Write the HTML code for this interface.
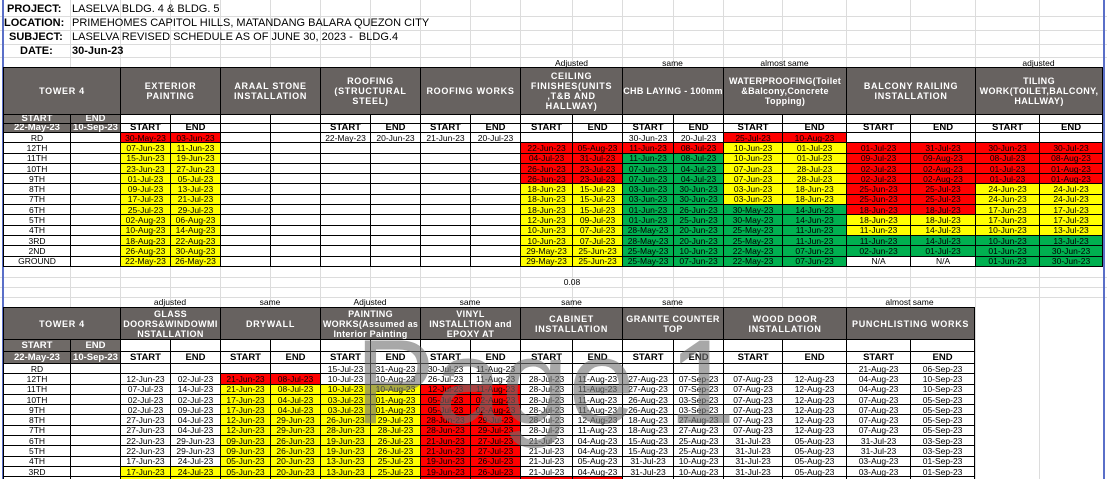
<!DOCTYPE html>
<html><head><meta charset="utf-8"><style>
html,body{margin:0;padding:0;width:1107px;height:479px;overflow:hidden;background:#fff;position:relative;font-family:"Liberation Sans",Arial,sans-serif}
.gl{position:absolute;top:0;height:479px;width:1px;background:#dcdcdc}
.hl{position:absolute;left:0;width:1107px;height:1px;background:#dcdcdc}
table{position:absolute;border-collapse:collapse;table-layout:fixed;font-size:8.5px;background:#fff}
td{border:1px solid #000;padding:0;text-align:center;white-space:nowrap;overflow:hidden;line-height:8px;color:#000}
.h{background:#676260;color:#fff;font-weight:bold;font-size:9px;line-height:10px;white-space:normal;letter-spacing:.7px;padding:0 3px}
.s{background:#6f6a67;color:#fff;font-weight:bold;font-size:9.5px;line-height:8px}
.b{font-weight:bold;font-size:9.5px}
.r{background:#ff0000}.y{background:#ffff00}.g{background:#00b050}
.lbl{position:absolute;font-size:8.5px;color:#000;text-align:center}
.info{position:absolute;font-size:11px;line-height:14px}
</style></head><body>
<div class="gl" style="left:70px"></div><div class="gl" style="left:120px"></div><div class="gl" style="left:170px"></div><div class="gl" style="left:220px"></div><div class="gl" style="left:270px"></div><div class="gl" style="left:320px"></div><div class="gl" style="left:370px"></div><div class="gl" style="left:420px"></div><div class="gl" style="left:470px"></div><div class="gl" style="left:520px"></div><div class="gl" style="left:572px"></div><div class="gl" style="left:622px"></div><div class="gl" style="left:673px"></div><div class="gl" style="left:723px"></div><div class="gl" style="left:782px"></div><div class="gl" style="left:846px"></div><div class="gl" style="left:910px"></div><div class="gl" style="left:975px"></div><div class="gl" style="left:1039px"></div>
<div class="hl" style="top:16px"></div><div class="hl" style="top:30px"></div><div class="hl" style="top:44px"></div><div class="hl" style="top:57px"></div><div class="hl" style="top:277px"></div><div class="hl" style="top:287px"></div><div class="hl" style="top:297px"></div>
<div style="position:absolute;left:2px;top:0;width:2px;height:479px;background:#5a6fc8"></div>
<div style="position:absolute;left:1103px;top:0;width:2px;height:479px;background:#5a6fc8"></div>

<div class="info" style="left:7px;top:2px;font-weight:bold">PROJECT:</div><div class="info" style="left:72px;top:2px">LASELVA BLDG. 4 &amp; BLDG. 5</div>
<div class="info" style="left:4px;top:16px;font-weight:bold">LOCATION:</div><div class="info" style="left:72px;top:16px">PRIMEHOMES CAPITOL HILLS, MATANDANG BALARA QUEZON CITY</div>
<div class="info" style="left:9px;top:30px;font-weight:bold">SUBJECT:</div><div class="info" style="left:72px;top:30px">LASELVA REVISED SCHEDULE AS OF JUNE 30, 2023 -&nbsp; BLDG.4</div>
<div class="info" style="left:20px;top:44px;font-weight:bold">DATE:</div><div class="info" style="left:72px;top:44px;font-weight:bold">30-Jun-23</div>

<div class="lbl" style="left:521px;top:58px;width:101px">Adjusted</div>
<div class="lbl" style="left:622px;top:58px;width:101px">same</div>
<div class="lbl" style="left:723px;top:58px;width:123px">almost same</div>
<div class="lbl" style="left:975px;top:58px;width:127px">adjusted</div>

<table style="left:3px;top:67px;width:1099px">
<colgroup><col style="width:67px"><col style="width:50px"><col style="width:50px"><col style="width:50px"><col style="width:50px"><col style="width:50px"><col style="width:50px"><col style="width:50px"><col style="width:50px"><col style="width:50px"><col style="width:52px"><col style="width:50px"><col style="width:51px"><col style="width:50px"><col style="width:59px"><col style="width:64px"><col style="width:64px"><col style="width:65px"><col style="width:64px"><col style="width:63px"></colgroup>
<tr style="height:47px"><td class="h" colspan="2">TOWER 4</td><td class="h" colspan="2">EXTERIOR PAINTING</td><td class="h" colspan="2">ARAAL STONE INSTALLATION</td><td class="h" colspan="2">ROOFING (STRUCTURAL STEEL)</td><td class="h" colspan="2">ROOFING WORKS</td><td class="h" colspan="2">CEILING FINISHES(UNITS ,T&amp;B AND HALLWAY)</td><td class="h" colspan="2" style="padding:0;letter-spacing:.3px">CHB LAYING - 100mm</td><td class="h" colspan="2" style="letter-spacing:.3px">WATERPROOFING(Toilet &amp;Balcony,Concrete Topping)</td><td class="h" colspan="2">BALCONY RAILING INSTALLATION</td><td class="h" colspan="2" style="letter-spacing:.4px">TILING WORK(TOILET,BALCONY, HALLWAY)</td></tr>
<tr style="height:8px"><td class="s">START</td><td class="s">END</td><td></td><td></td><td></td><td></td><td></td><td></td><td></td><td></td><td></td><td></td><td></td><td></td><td></td><td></td><td></td><td></td><td></td><td></td></tr>
<tr style="height:8px"><td class="s">22-May-23</td><td class="s">10-Sep-23</td><td class="b">START</td><td class="b">END</td><td></td><td></td><td class="b">START</td><td class="b">END</td><td class="b">START</td><td class="b">END</td><td class="b">START</td><td class="b">END</td><td class="b">START</td><td class="b">END</td><td class="b">START</td><td class="b">END</td><td class="b">START</td><td class="b">END</td><td class="b">START</td><td class="b">END</td></tr>
<tr style="height:10.3px"><td>RD</td><td></td><td class="r">30-May-23</td><td class="r">03-Jun-23</td><td></td><td></td><td>22-May-23</td><td>20-Jun-23</td><td>21-Jun-23</td><td>20-Jul-23</td><td></td><td></td><td>30-Jun-23</td><td>20-Jul-23</td><td class="r">25-Jul-23</td><td class="r">10-Aug-23</td><td></td><td></td><td></td><td></td></tr>
<tr style="height:10.3px"><td>12TH</td><td></td><td class="y">07-Jun-23</td><td class="y">11-Jun-23</td><td></td><td></td><td></td><td></td><td></td><td></td><td class="r">22-Jun-23</td><td class="r">05-Aug-23</td><td class="r">11-Jun-23</td><td class="r">08-Jul-23</td><td class="y">10-Jun-23</td><td class="y">01-Jul-23</td><td class="r">01-Jul-23</td><td class="r">31-Jul-23</td><td class="r">30-Jun-23</td><td class="r">30-Jul-23</td></tr>
<tr style="height:10.3px"><td>11TH</td><td></td><td class="y">15-Jun-23</td><td class="y">19-Jun-23</td><td></td><td></td><td></td><td></td><td></td><td></td><td class="r">04-Jul-23</td><td class="r">31-Jul-23</td><td class="g">11-Jun-23</td><td class="g">08-Jul-23</td><td class="y">10-Jun-23</td><td class="y">01-Jul-23</td><td class="r">09-Jul-23</td><td class="r">09-Aug-23</td><td class="r">08-Jul-23</td><td class="r">08-Aug-23</td></tr>
<tr style="height:10.3px"><td>10TH</td><td></td><td class="y">23-Jun-23</td><td class="y">27-Jun-23</td><td></td><td></td><td></td><td></td><td></td><td></td><td class="r">26-Jun-23</td><td class="r">23-Jul-23</td><td class="g">07-Jun-23</td><td class="g">04-Jul-23</td><td class="y">07-Jun-23</td><td class="y">28-Jul-23</td><td class="r">02-Jul-23</td><td class="r">02-Aug-23</td><td class="r">01-Jul-23</td><td class="r">01-Aug-23</td></tr>
<tr style="height:10.3px"><td>9TH</td><td></td><td class="y">01-Jul-23</td><td class="y">05-Jul-23</td><td></td><td></td><td></td><td></td><td></td><td></td><td class="r">26-Jun-23</td><td class="r">23-Jul-23</td><td class="g">07-Jun-23</td><td class="g">04-Jul-23</td><td class="y">07-Jun-23</td><td class="y">28-Jul-23</td><td class="r">02-Jul-23</td><td class="r">02-Aug-23</td><td class="r">01-Jul-23</td><td class="r">01-Aug-23</td></tr>
<tr style="height:10.3px"><td>8TH</td><td></td><td class="y">09-Jul-23</td><td class="y">13-Jul-23</td><td></td><td></td><td></td><td></td><td></td><td></td><td class="y">18-Jun-23</td><td class="y">15-Jul-23</td><td class="g">03-Jun-23</td><td class="g">30-Jun-23</td><td class="y">03-Jun-23</td><td class="y">18-Jun-23</td><td class="r">25-Jun-23</td><td class="r">25-Jul-23</td><td class="y">24-Jun-23</td><td class="y">24-Jul-23</td></tr>
<tr style="height:10.3px"><td>7TH</td><td></td><td class="y">17-Jul-23</td><td class="y">21-Jul-23</td><td></td><td></td><td></td><td></td><td></td><td></td><td class="y">18-Jun-23</td><td class="y">15-Jul-23</td><td class="g">03-Jun-23</td><td class="g">30-Jun-23</td><td class="y">03-Jun-23</td><td class="y">18-Jun-23</td><td class="r">25-Jun-23</td><td class="r">25-Jul-23</td><td class="y">24-Jun-23</td><td class="y">24-Jul-23</td></tr>
<tr style="height:10.3px"><td>6TH</td><td></td><td class="y">25-Jul-23</td><td class="y">29-Jul-23</td><td></td><td></td><td></td><td></td><td></td><td></td><td class="y">18-Jun-23</td><td class="y">15-Jul-23</td><td class="g">01-Jun-23</td><td class="g">26-Jun-23</td><td class="g">30-May-23</td><td class="g">14-Jun-23</td><td class="r">18-Jun-23</td><td class="r">18-Jul-23</td><td class="y">17-Jun-23</td><td class="y">17-Jul-23</td></tr>
<tr style="height:10.3px"><td>5TH</td><td></td><td class="y">02-Aug-23</td><td class="y">06-Aug-23</td><td></td><td></td><td></td><td></td><td></td><td></td><td class="y">12-Jun-23</td><td class="y">09-Jul-23</td><td class="g">01-Jun-23</td><td class="g">25-Jun-23</td><td class="g">30-May-23</td><td class="g">14-Jun-23</td><td class="y">18-Jun-23</td><td class="y">18-Jul-23</td><td class="y">17-Jun-23</td><td class="y">17-Jul-23</td></tr>
<tr style="height:10.3px"><td>4TH</td><td></td><td class="y">10-Aug-23</td><td class="y">14-Aug-23</td><td></td><td></td><td></td><td></td><td></td><td></td><td class="y">10-Jun-23</td><td class="y">07-Jul-23</td><td class="g">28-May-23</td><td class="g">20-Jun-23</td><td class="g">25-May-23</td><td class="g">11-Jun-23</td><td class="y">11-Jun-23</td><td class="y">14-Jul-23</td><td class="y">10-Jun-23</td><td class="y">13-Jul-23</td></tr>
<tr style="height:10.3px"><td>3RD</td><td></td><td class="y">18-Aug-23</td><td class="y">22-Aug-23</td><td></td><td></td><td></td><td></td><td></td><td></td><td class="y">10-Jun-23</td><td class="y">07-Jul-23</td><td class="g">28-May-23</td><td class="g">20-Jun-23</td><td class="g">25-May-23</td><td class="g">11-Jun-23</td><td class="g">11-Jun-23</td><td class="g">14-Jul-23</td><td class="g">10-Jun-23</td><td class="g">13-Jul-23</td></tr>
<tr style="height:10.3px"><td>2ND</td><td></td><td class="y">26-Aug-23</td><td class="y">30-Aug-23</td><td></td><td></td><td></td><td></td><td></td><td></td><td class="y">29-May-23</td><td class="y">25-Jun-23</td><td class="g">25-May-23</td><td class="g">10-Jun-23</td><td class="g">22-May-23</td><td class="g">07-Jun-23</td><td class="g">02-Jun-23</td><td class="g">01-Jul-23</td><td class="g">01-Jun-23</td><td class="g">30-Jun-23</td></tr>
<tr style="height:10.3px"><td>GROUND</td><td></td><td class="y">22-May-23</td><td class="y">26-May-23</td><td></td><td></td><td></td><td></td><td></td><td></td><td class="y">29-May-23</td><td class="y">25-Jun-23</td><td class="g">25-May-23</td><td class="g">07-Jun-23</td><td class="g">22-May-23</td><td class="g">07-Jun-23</td><td>N/A</td><td>N/A</td><td class="g">01-Jun-23</td><td class="g">30-Jun-23</td></tr>
</table>

<div class="lbl" style="left:522px;top:277px;width:100px">0.08</div>

<div class="lbl" style="left:120px;top:297px;width:100px">adjusted</div>
<div class="lbl" style="left:220px;top:297px;width:100px">same</div>
<div class="lbl" style="left:320px;top:297px;width:100px">Adjusted</div>
<div class="lbl" style="left:420px;top:297px;width:100px">same</div>
<div class="lbl" style="left:521px;top:297px;width:101px">same</div>
<div class="lbl" style="left:622px;top:297px;width:101px">same</div>
<div class="lbl" style="left:846px;top:297px;width:127px">almost same</div>

<table style="left:3px;top:307px;width:971px">
<colgroup><col style="width:67px"><col style="width:50px"><col style="width:50px"><col style="width:50px"><col style="width:50px"><col style="width:50px"><col style="width:50px"><col style="width:50px"><col style="width:50px"><col style="width:50px"><col style="width:52px"><col style="width:50px"><col style="width:51px"><col style="width:50px"><col style="width:59px"><col style="width:64px"><col style="width:64px"><col style="width:64px"></colgroup>
<tr style="height:32px"><td class="h" colspan="2">TOWER 4</td><td class="h" colspan="2" style="padding:0;letter-spacing:.4px">GLASS DOORS&amp;WINDOWMI NSTALLATION</td><td class="h" colspan="2">DRYWALL</td><td class="h" colspan="2" style="padding:0;letter-spacing:.3px">PAINTING WORKS(Assumed as Interior Painting</td><td class="h" colspan="2" style="letter-spacing:.4px">VINYL INSTALLTION and EPOXY AT</td><td class="h" colspan="2">CABINET INSTALLATION</td><td class="h" colspan="2" style="letter-spacing:.4px">GRANITE COUNTER TOP</td><td class="h" colspan="2">WOOD DOOR INSTALLATION</td><td class="h" colspan="2">PUNCHLISTING WORKS</td></tr>
<tr style="height:12px"><td class="s">START</td><td class="s">END</td><td></td><td></td><td></td><td></td><td></td><td></td><td></td><td></td><td></td><td></td><td></td><td></td><td></td><td></td><td></td><td></td></tr>
<tr style="height:12px"><td class="s">22-May-23</td><td class="s">10-Sep-23</td><td class="b">START</td><td class="b">END</td><td class="b">START</td><td class="b">END</td><td class="b">START</td><td class="b">END</td><td class="b">START</td><td class="b">END</td><td class="b">START</td><td class="b">END</td><td class="b">START</td><td class="b">END</td><td class="b">START</td><td class="b">END</td><td class="b">START</td><td class="b">END</td></tr>
<tr style="height:10.3px"><td>RD</td><td></td><td></td><td></td><td></td><td></td><td>15-Jul-23</td><td>31-Aug-23</td><td>30-Jul-23</td><td>11-Aug-23</td><td></td><td></td><td></td><td></td><td></td><td></td><td>21-Aug-23</td><td>06-Sep-23</td></tr>
<tr style="height:10.3px"><td>12TH</td><td></td><td>12-Jun-23</td><td>02-Jul-23</td><td class="r">21-Jun-23</td><td class="r">08-Jul-23</td><td>10-Jul-23</td><td>10-Aug-23</td><td>26-Jul-23</td><td>11-Aug-23</td><td>28-Jul-23</td><td>11-Aug-23</td><td>27-Aug-23</td><td>07-Sep-23</td><td>07-Aug-23</td><td>12-Aug-23</td><td>04-Aug-23</td><td>10-Sep-23</td></tr>
<tr style="height:10.3px"><td>11TH</td><td></td><td>07-Jul-23</td><td>14-Jul-23</td><td class="y">21-Jun-23</td><td class="y">08-Jul-23</td><td class="y">10-Jul-23</td><td class="y">10-Aug-23</td><td class="r">12-Jul-23</td><td class="r">11-Aug-23</td><td>28-Jul-23</td><td>11-Aug-23</td><td>27-Aug-23</td><td>07-Sep-23</td><td>07-Aug-23</td><td>12-Aug-23</td><td>04-Aug-23</td><td>10-Sep-23</td></tr>
<tr style="height:10.3px"><td>10TH</td><td></td><td>02-Jul-23</td><td>02-Jul-23</td><td class="y">17-Jun-23</td><td class="y">04-Jul-23</td><td class="y">03-Jul-23</td><td class="y">01-Aug-23</td><td class="r">05-Jul-23</td><td class="r">02-Aug-23</td><td>28-Jul-23</td><td>11-Aug-23</td><td>26-Aug-23</td><td>03-Sep-23</td><td>07-Aug-23</td><td>12-Aug-23</td><td>07-Aug-23</td><td>05-Sep-23</td></tr>
<tr style="height:10.3px"><td>9TH</td><td></td><td>02-Jul-23</td><td>09-Jul-23</td><td class="y">17-Jun-23</td><td class="y">04-Jul-23</td><td class="y">03-Jul-23</td><td class="y">01-Aug-23</td><td class="r">05-Jul-23</td><td class="r">02-Aug-23</td><td>28-Jul-23</td><td>11-Aug-23</td><td>26-Aug-23</td><td>03-Sep-23</td><td>07-Aug-23</td><td>12-Aug-23</td><td>07-Aug-23</td><td>05-Sep-23</td></tr>
<tr style="height:10.3px"><td>8TH</td><td></td><td>27-Jun-23</td><td>04-Jul-23</td><td class="y">12-Jun-23</td><td class="y">29-Jun-23</td><td class="y">26-Jun-23</td><td class="y">29-Jul-23</td><td class="r">28-Jun-23</td><td class="r">29-Jul-23</td><td>28-Jul-23</td><td>12-Aug-23</td><td>18-Aug-23</td><td>27-Aug-23</td><td>07-Aug-23</td><td>12-Aug-23</td><td>07-Aug-23</td><td>05-Sep-23</td></tr>
<tr style="height:10.3px"><td>7TH</td><td></td><td>27-Jun-23</td><td>04-Jul-23</td><td class="y">12-Jun-23</td><td class="y">29-Jun-23</td><td class="y">28-Jun-23</td><td class="y">28-Jul-23</td><td class="r">28-Jun-23</td><td class="r">29-Jul-23</td><td>28-Jul-23</td><td>11-Aug-23</td><td>18-Aug-23</td><td>27-Aug-23</td><td>07-Aug-23</td><td>12-Aug-23</td><td>07-Aug-23</td><td>05-Sep-23</td></tr>
<tr style="height:10.3px"><td>6TH</td><td></td><td>22-Jun-23</td><td>29-Jun-23</td><td class="y">09-Jun-23</td><td class="y">26-Jun-23</td><td class="y">19-Jun-23</td><td class="y">26-Jul-23</td><td class="r">21-Jun-23</td><td class="r">27-Jul-23</td><td>21-Jul-23</td><td>04-Aug-23</td><td>15-Aug-23</td><td>25-Aug-23</td><td>31-Jul-23</td><td>05-Aug-23</td><td>31-Jul-23</td><td>03-Sep-23</td></tr>
<tr style="height:10.3px"><td>5TH</td><td></td><td>22-Jun-23</td><td>29-Jun-23</td><td class="y">09-Jun-23</td><td class="y">26-Jun-23</td><td class="y">19-Jun-23</td><td class="y">26-Jul-23</td><td class="r">21-Jun-23</td><td class="r">27-Jul-23</td><td>21-Jul-23</td><td>04-Aug-23</td><td>15-Aug-23</td><td>25-Aug-23</td><td>31-Jul-23</td><td>05-Aug-23</td><td>31-Jul-23</td><td>03-Sep-23</td></tr>
<tr style="height:10.3px"><td>4TH</td><td></td><td>17-Jun-23</td><td>24-Jul-23</td><td class="y">05-Jun-23</td><td class="y">20-Jun-23</td><td class="y">13-Jun-23</td><td class="y">25-Jul-23</td><td class="r">19-Jun-23</td><td class="r">26-Jul-23</td><td>21-Jul-23</td><td>05-Aug-23</td><td>31-Jul-23</td><td>10-Aug-23</td><td>31-Jul-23</td><td>05-Aug-23</td><td>03-Aug-23</td><td>01-Sep-23</td></tr>
<tr style="height:10.3px"><td>3RD</td><td></td><td class="y">17-Jun-23</td><td class="y">24-Jul-23</td><td class="y">05-Jun-23</td><td class="y">20-Jun-23</td><td class="y">13-Jun-23</td><td class="y">25-Jul-23</td><td class="r">19-Jun-23</td><td class="r">26-Jul-23</td><td>21-Jul-23</td><td>04-Aug-23</td><td>31-Jul-23</td><td>10-Aug-23</td><td>31-Jul-23</td><td>05-Aug-23</td><td>03-Aug-23</td><td>01-Sep-23</td></tr>
<tr style="height:10.3px"><td>2ND</td><td></td><td class="y">10-Jun-23</td><td class="y">17-Jun-23</td><td class="y">01-Jun-23</td><td class="y">16-Jun-23</td><td class="y">07-Jun-23</td><td class="y">20-Jul-23</td><td class="r">14-Jun-23</td><td class="r">22-Jul-23</td><td class="r">14-Jul-23</td><td class="r">28-Jul-23</td><td>27-Jul-23</td><td>06-Aug-23</td><td>24-Jul-23</td><td>29-Jul-23</td><td>31-Jul-23</td><td>30-Aug-23</td></tr>
</table>

<div style="position:absolute;left:355px;top:322px;font-size:120px;line-height:1;color:rgba(110,110,110,0.6);white-space:nowrap;pointer-events:none">Page 1</div>
</body></html>
